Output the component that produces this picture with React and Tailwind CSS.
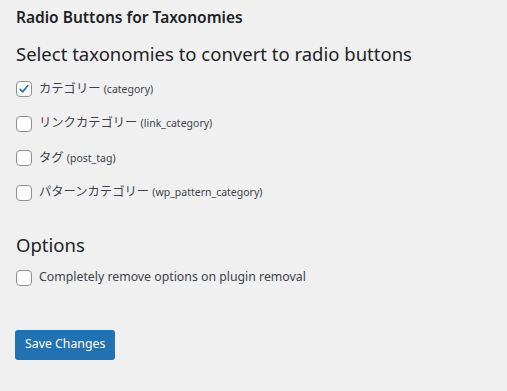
import React from 'react';

const font = { fontFamily: '"Noto Sans", "Noto Sans CJK JP", sans-serif' };

const Box = ({ checked }) => (
  <span className="w-4 h-4 shrink-0 rounded-[4px] border border-[#8c8f94] bg-white flex items-center justify-center">
    {checked && (
      <svg viewBox="0 0 20 20" className="w-[18px] h-[18px] -mt-px">
        <path d="M4.5 10.5 L8.2 14 L15.5 5" fill="none" stroke="#2271b1" strokeWidth="2.4" strokeLinecap="round" strokeLinejoin="round" />
      </svg>
    )}
  </span>
);

const Row = ({ checked, label, slug }) => (
  <label className="flex items-center gap-[7px] h-[18px]">
    <Box checked={checked} />
    <span className="text-[12.3px] text-[#3c434a]">
      {label} {slug && <span className="text-[10.5px]">({slug})</span>}
    </span>
  </label>
);

export default function App() {
  const taxes = [
    { label: 'カテゴリー', slug: 'category', checked: true },
    { label: 'リンクカテゴリー', slug: 'link_category' },
    { label: 'タグ', slug: 'post_tag' },
    { label: 'パターンカテゴリー', slug: 'wp_pattern_category' },
  ];
  return (
    <div className="min-h-[391px] bg-[#f0f0f1] px-4 pt-[7px]" style={font}>
      <h1 className="text-[15.5px] font-semibold text-[#1d2327] leading-[20px]">Radio Buttons for Taxonomies</h1>
      <h2 className="mt-[14px] text-[18.5px] text-[#1d2327] leading-[26px]">Select taxonomies to convert to radio buttons</h2>
      <div className="mt-[13px] flex flex-col gap-[16.5px]">
        {taxes.map((t) => (
          <Row key={t.slug} {...t} />
        ))}
      </div>
      <h2 className="mt-[30px] text-[18.5px] text-[#1d2327] leading-[26px]">Options</h2>
      <div className="mt-[11px]">
        <Row label="Completely remove options on plugin removal" />
      </div>
      <button className="mt-[43px] -ml-px h-[30px] px-[10px] rounded-[3px] bg-[#2271b1] text-white text-[12.3px]">
        Save Changes
      </button>
    </div>
  );
}
